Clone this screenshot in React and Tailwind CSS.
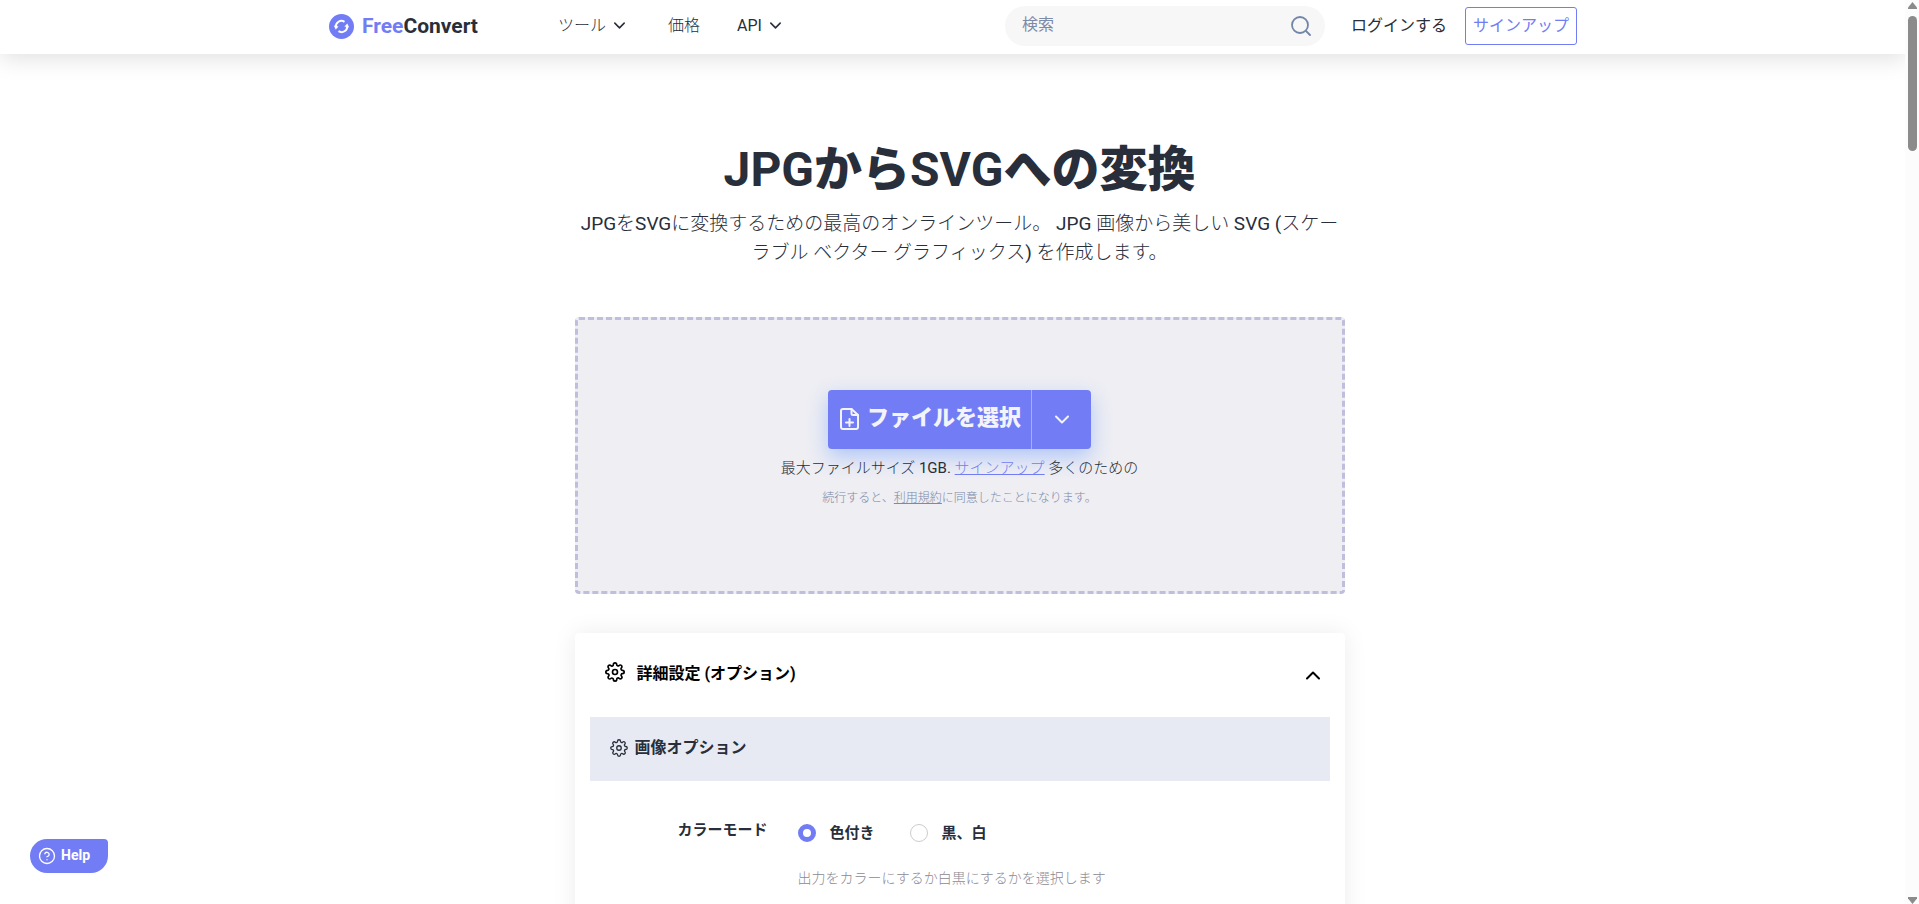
import React, { useState } from "react";
import { FiSettings, FiHelpCircle } from "react-icons/fi";

function Chevron({ className, width, up }) {
  return (
    <svg
      viewBox="0 0 14 9"
      className={className}
      fill="none"
      stroke="currentColor"
      strokeWidth={width}
      strokeLinecap="round"
      strokeLinejoin="round"
      aria-hidden="true"
    >
      <path d={up ? "M1 7.500l6-6 6 6" : "M1 1.500l6 6 6-6"} />
    </svg>
  );
}

function Logo() {
  return (
    <a href="#" className="flex items-center gap-2 text-[21px] leading-6 font-bold text-[#282e3a]">
      <svg viewBox="0 0 25 25" className="size-[25px]" aria-hidden="true">
        <circle cx="12.5" cy="12.5" r="12.5" fill="#727df5" />
        <g fill="none" stroke="#fff" strokeWidth="2">
          <path d="M6.900 13.200a5.600 5.600 0 0 1 8.600-5.400" />
          <path d="M18.100 11.800a5.600 5.600 0 0 1-8.600 5.400" />
        </g>
        <path d="M4.800 11.600l4.800.8-2.900 3.200zM20.200 13.400l-4.800-.8 2.900-3.200z" fill="#fff" />
      </svg>
      <span>
        <span className="text-[#727df5]">Free</span>Convert
      </span>
    </a>
  );
}

function Header() {
  return (
    <header className="mr-[13px] flex justify-center bg-white shadow-[0_4px_24px_rgba(0,0,0,0.13)]">
      <div className="flex h-[54px] w-full max-w-[1248px] items-center pb-0.5">
        <Logo />
        <nav className="ml-20 flex items-center pb-px font-[Roboto,'Noto_Sans_CJK_JP_Light','Noto_Sans_CJK_JP',sans-serif] text-base leading-6 font-normal text-[#282e3a]">
          <a href="#" className="flex items-center gap-2">
            ツール
            <Chevron className="h-[7px] w-[11px]" width={2} />
          </a>
          <a href="#" className="ml-[43px]">
            価格
          </a>
          <a href="#" className="ml-[37px] flex items-center gap-2">
            API
            <Chevron className="h-[7px] w-[11px]" width={2} />
          </a>
        </nav>
        <form className="ml-auto flex h-10 w-80 items-center rounded-full bg-[#f7f7f7] pr-3.5 pl-[17px]">
          <input
            type="text"
            aria-label="検索"
            placeholder="検索"
            className="min-w-0 flex-1 bg-transparent pb-0.5 text-base font-normal outline-none placeholder:text-[#7c8aa8]"
          />
          <button type="button" aria-label="検索する" className="text-[#7286a8]">
            <svg viewBox="0 0 20 20" className="size-5" fill="none" stroke="currentColor" strokeWidth="1.8" strokeLinecap="round">
              <circle cx="9" cy="9" r="8" />
              <path d="M15 15l4 4" />
            </svg>
          </button>
        </form>
        <a href="#" className="ml-[26px] text-base font-normal text-[#282e3a]">
          ログインする
        </a>
        <a
          href="#"
          className="ml-[18px] flex h-[38px] items-center rounded-[3px] border border-[#727df5] px-[7px] text-base font-normal text-[#727df5]"
        >
          サインアップ
        </a>
      </div>
    </header>
  );
}

function DropZone() {
  return (
    <section className="mt-[50px] flex h-[277px] flex-col items-center rounded border-3 border-dashed border-[#bfbfdd] bg-[#eeeef3] pt-[70px]">
      <div className="flex h-[59px] rounded bg-[#727df5] text-[#f3f3fa] shadow-[0_8px_20px_rgba(99,151,255,0.45)]">
        <button type="button" className="flex items-center gap-2 border-r border-[#a3b4e6] pr-2.5 pb-0.5 pl-[11px] font-[Roboto,'Noto_Sans_CJK_JP_Black','Noto_Sans_CJK_JP',sans-serif] text-[22px] leading-8 font-bold">
          <svg viewBox="0 0 20 24" className="h-6 w-5" fill="none" stroke="currentColor" strokeWidth="2" strokeLinecap="round" strokeLinejoin="round" aria-hidden="true">
            <path d="M12.5 2H4a2 2 0 0 0-2 2v16a2 2 0 0 0 2 2h13a2 2 0 0 0 2-2V8z" />
            <path d="M12.5 2v4.500a1.500 1.500 0 0 0 1.500 1.500h5" />
            <path d="M10.500 12v7M7 15.500h7" />
          </svg>
          <span className="pb-0.5">ファイルを選択</span>
        </button>
        <button type="button" aria-label="その他の選択元" className="flex w-[59px] items-center justify-center">
          <Chevron className="h-[9px] w-3.5" width={2} />
        </button>
      </div>
      <p className="mt-[7px] font-[Roboto,'Noto_Sans_CJK_JP_Light','Noto_Sans_CJK_JP',sans-serif] text-[15px] leading-6 font-normal text-[#282e3a]">
        最大ファイルサイズ 1GB.{" "}
        <a href="#" className="text-[#727df5] underline">
          サインアップ
        </a>{" "}
        多くのための
      </p>
      <p className="mt-2 text-xs leading-5 font-light text-[#7c8aa8]">
        続行すると、
        <a href="#" className="underline">
          利用規約
        </a>
        に同意したことになります。
      </p>
    </section>
  );
}

function RadioOption({ value, label, checked, onChange }) {
  return (
    <label className="flex items-center gap-3.5">
      <input
        type="radio"
        name="color-mode"
        value={value}
        checked={checked}
        onChange={() => onChange(value)}
        className="size-[18px] appearance-none rounded-full border border-[#cccccc] bg-white checked:border-[5px] checked:border-[#727df5]"
      />
      {label}
    </label>
  );
}

function AdvancedSettings() {
  const [mode, setMode] = useState("color");
  return (
    <section className="mt-[39px] rounded bg-white px-[15px] shadow-[0_0_24px_rgba(0,0,0,0.08)]">
      <button type="button" className="flex h-[84px] w-full items-center gap-3 pr-[10px] pl-[15px] pb-0.5 text-base leading-6 font-bold text-black">
        <FiSettings className="mb-1 size-5" />
        詳細設定 (オプション)
        <Chevron className="mt-0.5 ml-auto h-[9px] w-3.5" width={2} up />
      </button>
      <h2 className="flex h-16 items-center gap-[7px] bg-[#e7eaf2] px-5 pb-0.5 text-base leading-6 font-bold text-[#282e3a]">
        <FiSettings className="size-[18px]" strokeWidth="1.75" />
        画像オプション
      </h2>
      <fieldset className="flex pt-[37px] pb-24 text-[15px] leading-6 font-bold text-[#282e3a]">
        <span className="w-[178px] text-right">カラーモード</span>
        <div className="ml-[30px] pt-[3px]">
          <div className="flex gap-[35px]">
            <RadioOption value="color" label="色付き" checked={mode === "color"} onChange={setMode} />
            <RadioOption value="mono" label="黒、白" checked={mode === "mono"} onChange={setMode} />
          </div>
          <p className="mt-[21px] text-sm leading-6 font-light text-[#8b8992]">
            出力をカラーにするか白黒にするかを選択します
          </p>
        </div>
      </fieldset>
    </section>
  );
}

function ScrollTrack() {
  return (
    <div className="absolute inset-y-0 right-0 flex w-[14px] flex-col items-center bg-[#fcfcfc] pt-0.5 text-[#8b8b8b]" aria-hidden="true">
      <svg viewBox="0 0 9 7" className="h-[7px] w-[9px]">
        <path d="M4.500 0L9 5.500V7H0V5.500z" fill="currentColor" />
      </svg>
      <div className="mt-[7px] h-[135px] w-[9px] rounded-full bg-[#8b8b8b]" />
      <svg viewBox="0 0 9 7" className="mt-auto h-[7px] w-[9px]">
        <path d="M0 0H9V1.500L4.500 7L0 1.500z" fill="currentColor" />
      </svg>
    </div>
  );
}

export default function App() {
  return (
    <div lang="ja" className="relative h-screen overflow-hidden bg-white font-[Roboto,'Noto_Sans_CJK_JP',sans-serif]">
      <Header />
      <main className="mx-auto max-w-[770px]">
        <h1 className="mt-20 text-center font-[Roboto,'Noto_Sans_CJK_JP_Black','Noto_Sans_CJK_JP',sans-serif] text-5xl leading-[72px] font-bold text-[#282e3a]">
          JPGからSVGへの変換
        </h1>
        <p className="mt-[3px] px-1 text-center font-[Roboto,'Noto_Sans_CJK_JP_Light','Noto_Sans_CJK_JP',sans-serif] text-[19px] leading-[29px] font-normal text-[#282e3a]">
          JPGをSVGに変換するための最高のオンラインツール。 JPG 画像から美しい SVG (スケーラブル ベクター グラフィックス) を作成します。
        </p>
        <DropZone />
        <AdvancedSettings />
      </main>
      <button
        type="button"
        className="absolute bottom-[31px] left-[30px] flex h-[34px] items-center gap-[5px] rounded-[17px] rounded-tr bg-[#727df5] pr-[18px] pl-2 text-sm font-bold text-white"
      >
        <FiHelpCircle className="size-[18px]" strokeWidth="1.75" />
        <span className="pb-0.5">Help</span>
      </button>
      <ScrollTrack />
    </div>
  );
}
